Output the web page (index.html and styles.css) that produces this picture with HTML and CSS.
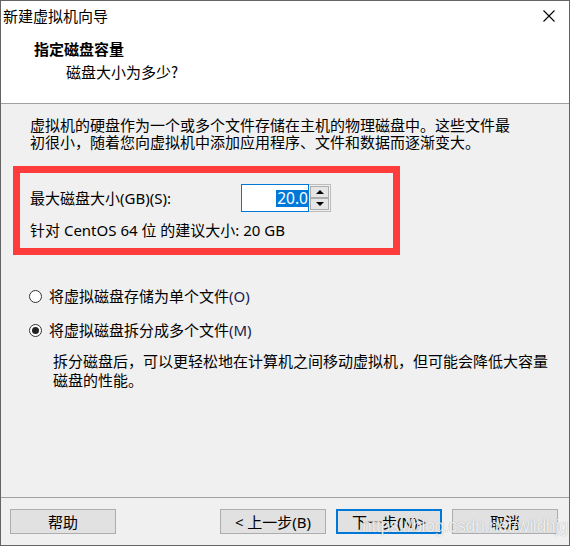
FILE: index.html
```html
<!DOCTYPE html>
<html lang="zh-CN">
<head>
<meta charset="utf-8">
<title>新建虚拟机向导</title>
<link rel="stylesheet" href="styles.css">
</head>
<body>
<div class="window">
  <div class="top">
    <div class="titlebar">
      <span class="title">新建虚拟机向导</span>
      <svg class="close" width="12" height="12" viewBox="0 0 12 12"><path d="M0.5 0.5 L11.5 11.5 M11.5 0.5 L0.5 11.5" stroke="#000" stroke-width="1.1" fill="none"/></svg>
    </div>
    <div class="header">
      <div class="h-title">指定磁盘容量</div>
      <div class="h-sub">磁盘大小为多少?</div>
    </div>
  </div>
  <div class="content">
    <p class="intro">虚拟机的硬盘作为一个或多个文件存储在主机的物理磁盘中。这些文件最<br>初很小，随着您向虚拟机中添加应用程序、文件和数据而逐渐变大。</p>
    <div class="highlight">
      <div class="size-row">
        <span class="size-label">最大磁盘大小(GB)(S):</span>
        <div class="spinner">
          <div class="spin-input"><span class="sel">20.0</span></div>
          <div class="spin-btns">
            <div class="spin-btn"><span class="tri-up"></span></div>
            <div class="spin-btn"><span class="tri-down"></span></div>
          </div>
        </div>
      </div>
      <div class="recommend">针对 CentOS 64 位 的建议大小: 20 GB</div>
    </div>
    <div class="options">
      <div class="radio-row"><span class="radio"></span><span>将虚拟磁盘存储为单个文件<span class="acc">(O)</span></span></div>
      <div class="radio-row second"><span class="radio checked"></span><span>将虚拟磁盘拆分成多个文件<span class="acc">(M)</span></span></div>
      <p class="desc">拆分磁盘后，可以更轻松地在计算机之间移动虚拟机，但可能会降低大容量<br>磁盘的性能。</p>
    </div>
  </div>
  <div class="footer">
    <div class="btn help">帮助</div>
    <div class="btn">&lt; 上一步<span class="acc">(B)</span></div>
    <div class="btn primary">下一步<span class="acc">(N)</span> &gt;</div>
    <div class="btn">取消</div>
  </div>
  <div class="watermark">https://blog.csdn.net/wildhjg</div>
</div>
</body>
</html>
```
FILE: styles.css
```css
* { box-sizing: border-box; }
html, body { margin: 0; padding: 0; }
body {
  width: 570px;
  height: 546px;
  font-family: "Noto Sans", "Noto Sans CJK SC", sans-serif;
  font-size: 15px;
  color: #000;
  background: #f0f0f0;
}
.window {
  position: relative;
  width: 570px;
  height: 546px;
  border: 1px solid #646464;
  display: flex;
  flex-direction: column;
  background: #f0f0f0;
  overflow: hidden;
}
.top {
  height: 103px;
  background: #fff;
  border-bottom: 1px solid #a0a0a0;
  flex: none;
}
.titlebar {
  height: 30px;
  display: flex;
  justify-content: space-between;
  align-items: flex-start;
  padding: 6px 14px 0 2px;
}
.title {
  font-family: "Noto Sans CJK SC", sans-serif;
  line-height: 18px;
}
.close { margin-top: 3px; }
.header {
  padding: 9px 0 0 33px;
  font-family: "Noto Sans CJK SC", sans-serif;
}
.h-title {
  font-weight: 700;
  line-height: 18px;
}
.h-sub {
  margin-top: 5px;
  padding-left: 32px;
  line-height: 18px;
}
.content {
  flex: 1;
  padding: 13px 12px 0 12px;
}
.intro {
  margin: 0 0 0 17px;
  line-height: 17px;
}
.highlight {
  margin-top: 15px;
  width: 387px;
  height: 89px;
  border: 7px solid #ff3c3c;
  padding: 11px 0 0 10px;
}
.size-row {
  display: flex;
  align-items: center;
  height: 28px;
}
.size-label {
  width: 211px;
  line-height: 17px;
}
.spinner {
  display: flex;
  height: 28px;
}
.spin-input {
  width: 68px;
  height: 28px;
  border: 1px solid #0078d7;
  background: #fff;
  display: flex;
  justify-content: flex-end;
  align-items: center;
  padding-right: 0;
}
.sel {
  background: #0078d7;
  color: #fff;
  font-size: 15.5px;
  line-height: 17px;
  height: 17px;
  padding: 0 0 0 1px;
}
.spin-btns {
  width: 22px;
  height: 28px;
  border: 1px solid #bcbcbc;
  border-left: none;
  padding: 1px;
  display: flex;
  flex-direction: column;
  background: #f0f0f0;
}
.spin-btn {
  flex: 1;
  border: 1px solid #adadad;
  background: #e5e5e5;
  display: flex;
  align-items: center;
  justify-content: center;
}
.tri-up {
  width: 0; height: 0;
  border-left: 4px solid transparent;
  border-right: 4px solid transparent;
  border-bottom: 4px solid #000;
}
.tri-down {
  width: 0; height: 0;
  border-left: 4px solid transparent;
  border-right: 4px solid transparent;
  border-top: 4px solid #000;
}
.recommend {
  margin-top: 10px;
  line-height: 17px;
}
.options { padding-left: 16px; }
.radio-row {
  margin-top: 32px;
  height: 18px;
  line-height: 18px;
  display: flex;
  align-items: center;
  gap: 7px;
}
.radio-row.second { margin-top: 16px; }
.radio {
  position: relative;
  width: 13px;
  height: 13px;
  border: 1px solid #333;
  border-radius: 50%;
  background: #fff;
  flex: none;
}
.radio.checked::after {
  content: "";
  position: absolute;
  left: 2px; top: 2px;
  width: 7px; height: 7px;
  border-radius: 50%;
  background: #222;
}
.acc { color: #1c1c50; }
.desc {
  margin: 13px 0 0 24px;
  line-height: 19px;
}
.footer {
  flex: none;
  height: 48px;
  border-top: 1px solid #a0a0a0;
  display: flex;
  align-items: flex-start;
  gap: 10px;
  padding: 11px 11px 0 9px;
}
.btn {
  width: 106px;
  height: 25px;
  border: 1px solid #adadad;
  background: #e1e1e1;
  display: flex;
  align-items: center;
  justify-content: center;
  line-height: 18px;
}
.btn.help { margin-right: auto; }
.btn.primary { border: 2px solid #0078d7; }
.btn .acc { color: #000; }
.watermark {
  position: absolute;
  left: 361px;
  top: 515px;
  font-family: "Liberation Sans", Arial, sans-serif;
  font-size: 17.5px;
  line-height: 20px;
  letter-spacing: -0.3px;
  color: rgba(255, 255, 255, 0.85);
  text-shadow: 0 0 1px rgba(0, 0, 0, 0.35);
  pointer-events: none;
}
```
